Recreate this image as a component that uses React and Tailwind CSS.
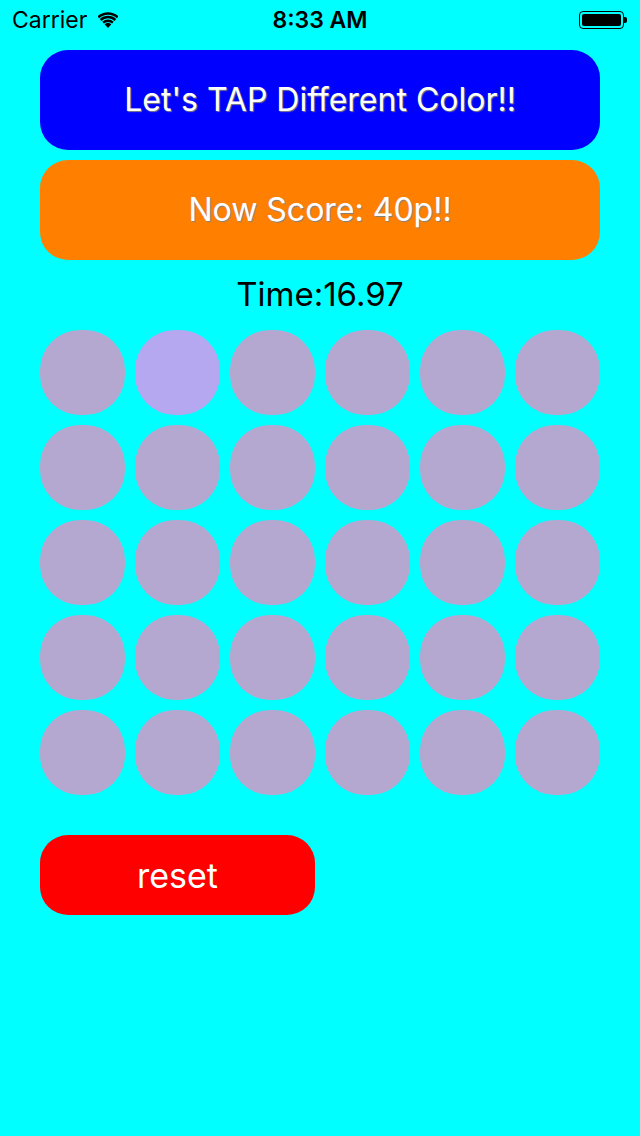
import React from "react";

const font = { fontFamily: "Inter, 'Noto Sans', sans-serif" };

function Wifi() {
  return (
    <svg width="20" height="16" viewBox="0 0 20 16">
      <path d="M10 16 L6.6 12.3 A5 5 0 0 1 13.4 12.3 Z" fill="black" />
      <path d="M4.3 9.8 A8.3 8.3 0 0 1 15.7 9.8 L14.1 11.6 A6 6 0 0 0 5.9 11.6 Z" fill="black" />
      <path d="M1.8 7.1 A12 12 0 0 1 18.2 7.1 L16.6 8.9 A9.6 9.6 0 0 0 3.4 8.9 Z" fill="black" />
      <path d="M-0.6 4.4 A15.6 15.6 0 0 1 20.6 4.4 L19 6.2 A13.3 13.3 0 0 0 1 6.2 Z" fill="black" />
    </svg>
  );
}

export default function App() {
  const cells = Array.from({ length: 30 }, (_, i) => i);
  return (
    <div className="w-[640px] h-[1136px] bg-[#00ffff] flex flex-col" style={font}>
      <div className="h-[40px] flex items-center px-[12px] relative">
        <div className="flex items-center gap-[11px]">
          <span className="text-[23px] text-black leading-none">Carrier</span>
          <Wifi />
        </div>
        <div className="absolute left-0 right-0 top-0 h-[40px] flex items-center justify-center">
          <span className="text-[23px] font-semibold text-black leading-none">8:33 AM</span>
        </div>
        <div className="ml-auto flex items-center mr-[1px]">
          <div className="w-[45px] h-[18px] border-[1.5px] border-black rounded-[4px] p-[2px]">
            <div className="w-full h-full bg-black rounded-[2px]" />
          </div>
          <div className="w-[3px] h-[6px] bg-black rounded-r-[2px]" />
        </div>
      </div>
      <div className="px-[40px] pt-[10px] flex flex-col">
        <div className="h-[100px] bg-[#0000ff] rounded-[28px] flex items-center justify-center">
          <span className="text-white text-[32px] [text-shadow:1px_1px_1px_#808080]">Let's TAP Different Color!!</span>
        </div>
        <div className="h-[100px] mt-[10px] bg-[#ff8000] rounded-[28px] flex items-center justify-center">
          <span className="text-white text-[32px] [text-shadow:1px_1px_1px_#808080]">Now Score: 40p!!</span>
        </div>
        <div className="h-[70px] flex items-center justify-center">
          <span className="text-black text-[33px]">Time:16.97</span>
        </div>
        <div className="grid grid-cols-6 gap-[10px]">
          {cells.map((i) => (
            <div
              key={i}
              className={
                i === 1
                  ? "w-[85px] h-[85px] rounded-[40px] bg-[#b5a8f0]"
                  : "w-[85px] h-[85px] rounded-[40px] bg-[#b5a8d0]"
              }
            />
          ))}
        </div>
        <div className="mt-[40px] w-[275px] h-[80px] bg-[#ff0000] rounded-[28px] flex items-center justify-center">
          <span className="text-white text-[34px]">reset</span>
        </div>
      </div>
    </div>
  );
}
